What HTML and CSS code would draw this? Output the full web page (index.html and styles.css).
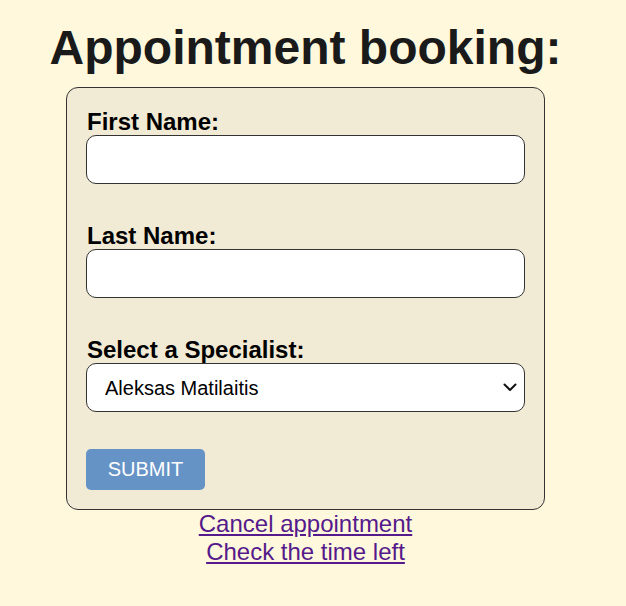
FILE: index.html
```html
<!DOCTYPE html>
<html lang="en">
<head>
<meta charset="utf-8">
<title>Appointment booking</title>
<link rel="stylesheet" href="styles.css">
</head>
<body>
<main class="page">
  <h1 class="title">Appointment booking:</h1>
  <form class="booking-form">
    <div class="field">
      <label class="field-label" for="first">First Name:</label>
      <input class="field-input" id="first" type="text">
    </div>
    <div class="field">
      <label class="field-label" for="last">Last Name:</label>
      <input class="field-input" id="last" type="text">
    </div>
    <div class="field field-last">
      <label class="field-label" for="spec">Select a Specialist:</label>
      <select class="field-input field-select" id="spec">
        <option>Aleksas Matilaitis</option>
      </select>
    </div>
    <button class="submit-btn" type="button">SUBMIT</button>
  </form>
  <nav class="links">
    <a class="link" href="#">Cancel appointment</a>
    <a class="link" href="#">Check the time left</a>
  </nav>
</main>
</body>
</html>
```
FILE: styles.css
```css
html, body {
  margin: 0;
  padding: 0;
  background: #fff8dc;
}
body {
  font-family: "Liberation Sans", Arial, sans-serif;
  color: #000;
}
.page {
  width: 611px;
  display: flex;
  flex-direction: column;
  align-items: center;
}
.title {
  margin: 20px 0 12px;
  font-size: 48px;
  line-height: 55px;
  font-weight: bold;
  color: #1a1a1a;
  white-space: nowrap;
}
.booking-form {
  box-sizing: border-box;
  width: 479px;
  background: #f1ead4;
  border: 1px solid #333;
  border-radius: 12px;
  padding: 20px 19px 19px;
  display: flex;
  flex-direction: column;
}
.field {
  display: flex;
  flex-direction: column;
  margin-bottom: 38px;
}
.field-last {
  margin-bottom: 37px;
}
.field-label {
  font-size: 24px;
  font-weight: bold;
  line-height: 27px;
  padding-left: 1px;
}
.field-input {
  box-sizing: border-box;
  width: 439px;
  height: 49px;
  border: 1px solid #333;
  border-radius: 10px;
  background: #fff;
  font-family: "Liberation Sans", Arial, sans-serif;
  font-size: 20px;
  padding: 0 18px;
  color: #000;
}
.field-select {
  appearance: none;
  -webkit-appearance: none;
  padding-left: 18px;
  padding-right: 36px;
  background-color: #fff;
  background-image: url("data:image/svg+xml,%3Csvg xmlns='http://www.w3.org/2000/svg' width='14' height='9' viewBox='0 0 14 9'%3E%3Cpath d='M1.5 1.5 L7 7 L12.5 1.5' fill='none' stroke='%23111' stroke-width='2' stroke-linecap='round' stroke-linejoin='round'/%3E%3C/svg%3E");
  background-repeat: no-repeat;
  background-position: right 7px center;
  background-size: 14px 9px;
}
.submit-btn {
  align-self: flex-start;
  width: 119px;
  height: 41px;
  background: #6693c6;
  color: #fff;
  border: none;
  border-radius: 5px;
  font-family: "Liberation Sans", Arial, sans-serif;
  font-size: 20px;
  padding: 0;
}
.links {
  display: flex;
  flex-direction: column;
  align-items: center;
}
.link {
  font-size: 24px;
  line-height: 28px;
  color: #551a8b;
}
```
